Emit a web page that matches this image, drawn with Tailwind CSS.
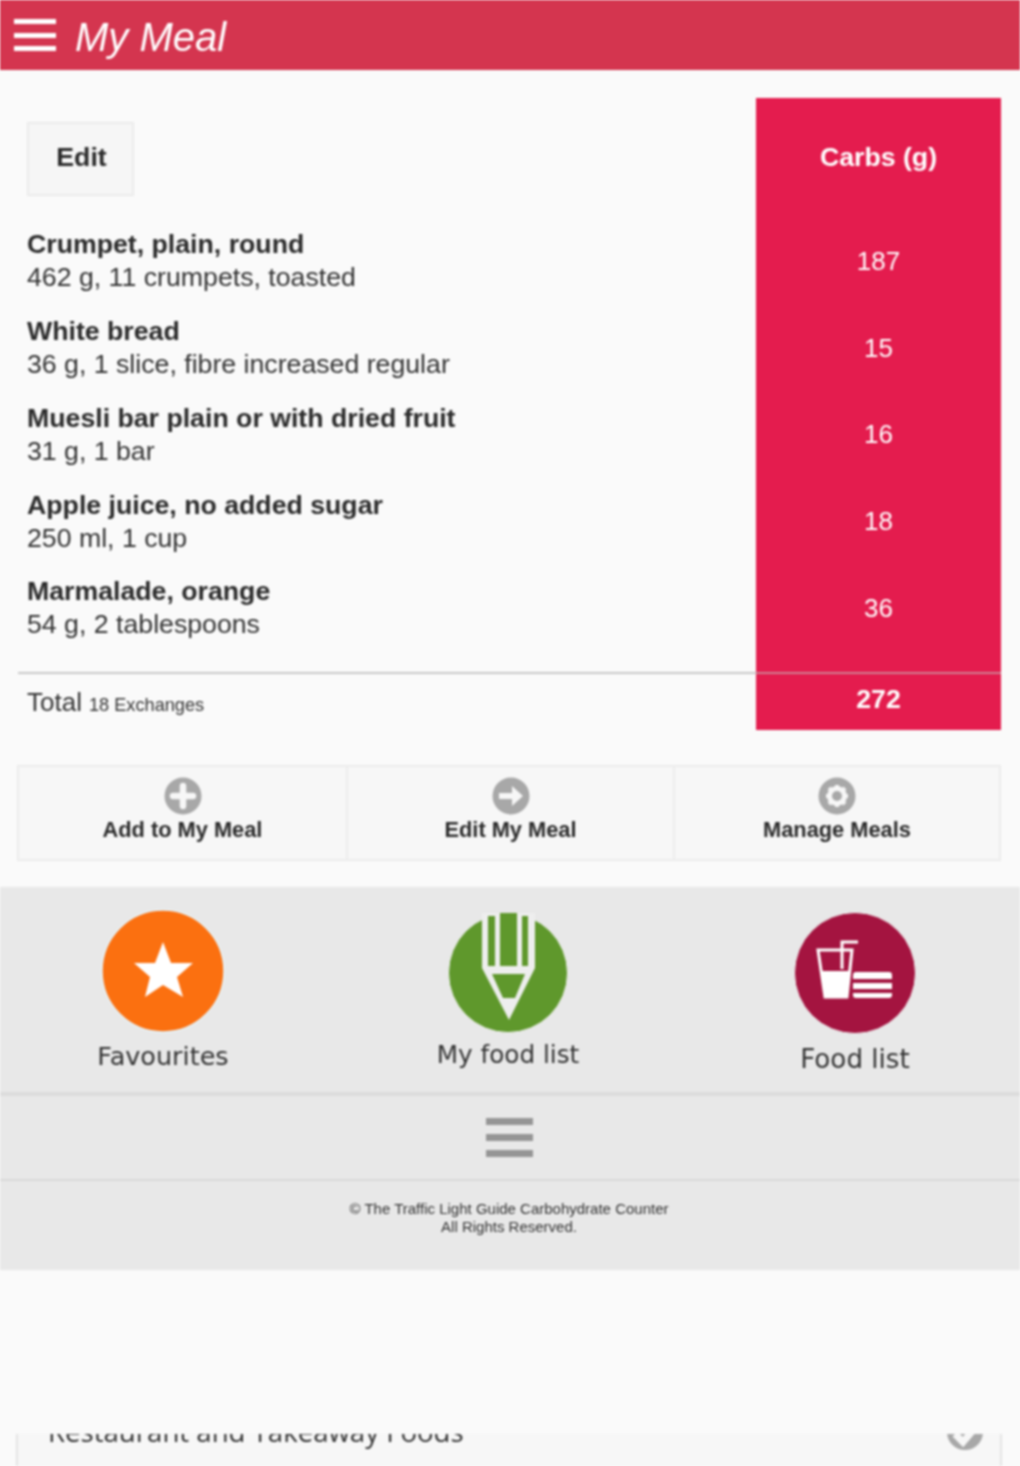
<!DOCTYPE html>
<html lang="en">
<head>
<meta charset="utf-8">
<script src="https://cdn.jsdelivr.net/npm/@tailwindcss/browser@4"></script>
</head>
<body class="m-0 bg-[#fafafa] font-['Liberation_Sans',Arial,sans-serif] text-[#333]">
<div class="relative w-[1020px] h-[1466px] overflow-hidden flex flex-col blur-[0.9px]">
  <header class="h-[70px] shrink-0 bg-[#d4354f] flex items-center pl-[14px] gap-[19px]">
    <div class="flex flex-col gap-[8.500px] w-[42px]">
      <span class="block h-[5px] bg-white"></span>
      <span class="block h-[5px] bg-white"></span>
      <span class="block h-[5px] bg-white"></span>
    </div>
    <h1 class="italic text-[40px] leading-none text-white mt-[3px]">My Meal</h1>
  </header>

  <main class="pt-[28px] pl-[18px] pr-[19px]">
    <div class="grid grid-cols-[738px_245px]">
      <div class="h-[120px] pt-[24px] pl-[9px]">
        <div class="w-[107px] h-[74px] pb-[3px] pl-[2px] border-2 border-[#ebebeb] bg-[#f6f6f6] flex items-center justify-center font-bold text-[26.700px] text-[#2b2b2b]">Edit</div>
      </div>
      <div class="h-[120px] bg-[#e41c4e] flex items-center justify-center pb-[1px] font-bold text-[26.700px] text-white">Carbs (g)</div>

      <div class="h-[86.750px] pl-[9px] flex flex-col justify-center text-[26.700px] leading-[33px]"><strong class="text-[#2b2b2b]">Crumpet, plain, round</strong><span>462 g, 11 crumpets, toasted</span></div>
      <div class="h-[86.750px] bg-[#e41c4e] flex items-center justify-center text-[26px] text-white">187</div>

      <div class="h-[86.750px] pl-[9px] flex flex-col justify-center text-[26.700px] leading-[33px]"><strong class="text-[#2b2b2b]">White bread</strong><span>36 g, 1 slice, fibre increased regular</span></div>
      <div class="h-[86.750px] bg-[#e41c4e] flex items-center justify-center text-[26px] text-white">15</div>

      <div class="h-[86.750px] pl-[9px] flex flex-col justify-center text-[26.700px] leading-[33px]"><strong class="text-[#2b2b2b]">Muesli bar plain or with dried fruit</strong><span>31 g, 1 bar</span></div>
      <div class="h-[86.750px] bg-[#e41c4e] flex items-center justify-center text-[26px] text-white">16</div>

      <div class="h-[86.750px] pl-[9px] flex flex-col justify-center text-[26.700px] leading-[33px]"><strong class="text-[#2b2b2b]">Apple juice, no added sugar</strong><span>250 ml, 1 cup</span></div>
      <div class="h-[86.750px] bg-[#e41c4e] flex items-center justify-center text-[26px] text-white">18</div>

      <div class="h-[86.750px] pl-[9px] flex flex-col justify-center text-[26.700px] leading-[33px]"><strong class="text-[#2b2b2b]">Marmalade, orange</strong><span>54 g, 2 tablespoons</span></div>
      <div class="h-[86.750px] bg-[#e41c4e] flex items-center justify-center text-[26px] text-white">36</div>

      <div class="h-[20.250px]"></div>
      <div class="h-[20.250px] bg-[#e41c4e]"></div>

      <div class="h-[2px] bg-[#c9c9c9]"></div>
      <div class="h-[2px] bg-[#cf8093]"></div>

      <div class="h-[56px] pl-[9px] flex items-baseline gap-[7px] pt-[12px] text-[26px] leading-[33px]">Total <span class="text-[18.200px]">18 Exchanges</span></div>
      <div class="h-[56px] pb-[6px] bg-[#e41c4e] flex items-center justify-center font-bold text-[26.700px] text-white">272</div>
    </div>

    <div class="mt-[35px] h-[96px] -ml-[1px] grid grid-cols-[329px_327px_1fr] border-2 border-[#ececec] bg-[#f7f7f7] text-[21.800px] font-bold text-[#2b2b2b]">
      <a class="flex flex-col items-center pt-[10px] border-r-2 border-[#ececec]">
        <svg class="w-[38px] h-[38px]" viewBox="0 0 38 38"><circle cx="19" cy="19" r="18.500" fill="#a8a8a8"/><path d="M9 19h20M19 9v20" stroke="#f7f7f7" stroke-width="6.500" stroke-linecap="round"/></svg>
        <span class="mt-[2px] leading-[26px]">Add to My Meal</span>
      </a>
      <a class="flex flex-col items-center pt-[10px] border-r-2 border-[#ececec]">
        <svg class="w-[38px] h-[38px]" viewBox="0 0 38 38"><circle cx="19" cy="19" r="18.500" fill="#a8a8a8"/><path d="M7 16h13V9l11 10-11 10v-7H7z" fill="#f7f7f7"/></svg>
        <span class="mt-[2px] leading-[26px]">Edit My Meal</span>
      </a>
      <a class="flex flex-col items-center pt-[10px]">
        <svg class="w-[38px] h-[38px]" viewBox="0 0 38 38"><circle cx="19" cy="19" r="18.500" fill="#a8a8a8"/><circle cx="19" cy="19" r="7.500" fill="none" stroke="#f7f7f7" stroke-width="5"/><path d="M19 8v5M19 25v5M8 19h5M25 19h5M11 11l3.500 3.500M23.500 23.500L27 27M11 27l3.500-3.500M23.500 14.500L27 11" stroke="#f7f7f7" stroke-width="4"/></svg>
        <span class="mt-[2px] leading-[26px]">Manage Meals</span>
      </a>
    </div>
  </main>

  <nav class="mt-[26px] h-[205px] shrink-0 bg-[#e8e8e8] font-['DejaVu_Sans',sans-serif] text-[#333] relative">
    <div class="absolute left-[53px] top-[22px] w-[220px] flex flex-col items-center">
      <svg class="w-[124px] h-[124px]" viewBox="0 0 124 124"><circle cx="62" cy="62" r="61" fill="#fb7010" stroke="#e6f2f6" stroke-width="1.500"/><path d="M62 33l8 21h22L76 68l6 20-20-12-18 12 5-20-16-14h21z" fill="#fff"/></svg>
      <span class="mt-[6px] text-[25.500px] leading-[34px]">Favourites</span>
    </div>
    <div class="absolute left-[398px] top-[26px] w-[220px] flex flex-col items-center">
      <svg class="w-[120px] h-[120px]" viewBox="0 0 120 120"><circle cx="60" cy="60" r="59.500" fill="#5f982c" stroke="#efefef" stroke-width="1"/><path d="M34 0h53v55l-26 52-27-52z" fill="#eeeeee"/><path d="M40 3h7v50h-7zM52 0h17v53H52zM74 3h6v50h-6z" fill="#5f982c"/><path d="M44 61h33L67 85H55z" fill="#5f982c"/></svg>
      <span class="mt-[5px] text-[24.700px] leading-[34px]">My food list</span>
    </div>
    <div class="absolute left-[745px] top-[25px] w-[220px] flex flex-col items-center">
      <svg class="w-[122px] h-[122px]" viewBox="0 0 122 122"><circle cx="61" cy="61" r="60.500" fill="#a41440" stroke="#eef4f2" stroke-width="1"/><path d="M24 38h34l-5 47H31z" fill="none" stroke="#fff" stroke-width="3"/><path d="M28 59h27l-2.500 27H31z" fill="#fff"/><path d="M48 57V30h16" fill="none" stroke="#fff" stroke-width="3"/><path d="M62 60h33q3 0 3 3v4H59v-4q0-3 3-3zM59 71h39v6H59zM59 81h39v2q0 3-3 3H62q-3 0-3-3z" fill="#fff"/></svg>
      <span class="mt-[8px] text-[26.200px] leading-[34px]">Food list</span>
    </div>
  </nav>

  <div class="h-[4px] shrink-0 bg-[#dcdcdc]"></div>
  <div class="h-[83px] shrink-0 bg-[#e8e8e8] flex items-center justify-center pr-[2px] pb-[1px]">
    <div class="flex flex-col gap-[9px] w-[47px]">
      <span class="block h-[7px] bg-[#959595]"></span>
      <span class="block h-[7px] bg-[#959595]"></span>
      <span class="block h-[7px] bg-[#959595]"></span>
    </div>
  </div>
  <div class="h-[2px] shrink-0 bg-[#d9d9d9]"></div>
  <footer class="h-[89px] shrink-0 bg-[#e8e8e8] pt-[19px] pr-[2px] text-center text-[15px] leading-[18px] text-[#333]">
    <p>© The Traffic Light Guide Carbohydrate Counter</p>
    <p>All Rights Reserved.</p>
  </footer>

  <div class="absolute left-[16px] right-[18px] top-[1434px] bottom-0 overflow-hidden border-x-2 border-[#e4e4e4] bg-[#f7f7f7]">
    <div class="h-[40px] -mt-[22px] pl-[30px] pr-[17px] flex items-center justify-between font-['Open_Sans',sans-serif] text-[27.600px] text-[#333]">
      <span>Restaurant and Takeaway Foods</span>
      <svg class="w-[36px] h-[36px]" viewBox="0 0 36 36"><circle cx="18" cy="18" r="18" fill="#a8a8a8"/><path d="M8 20l8 8 12-14" fill="none" stroke="#f7f7f7" stroke-width="7"/></svg>
    </div>
  </div>
</div>
</body>
</html>
